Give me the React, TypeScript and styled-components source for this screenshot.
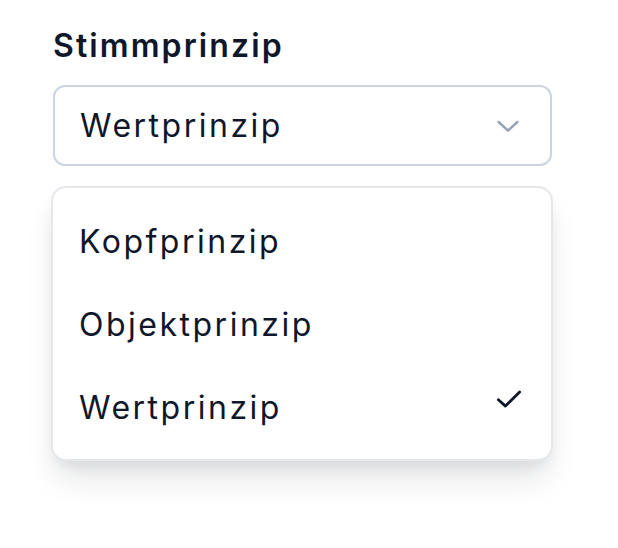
import React from 'react';
import styled, { createGlobalStyle } from 'styled-components';

const options = ['Kopfprinzip', 'Objektprinzip', 'Wertprinzip'];
const selected = 'Wertprinzip';

const App: React.FC = () => {
  return (
    <>
      <GlobalStyle />
      <Page>
        <Field>
          <Label>Stimmprinzip</Label>
          <Trigger type="button">
            <Value>{selected}</Value>
            <Chevron width="32" height="32" viewBox="0 0 24 24">
              <path d="M5 9l7 6.5 7-6.5" />
            </Chevron>
          </Trigger>
          <Panel>
            {options.map((opt) => (
              <Item key={opt}>
                <span>{opt}</span>
                {opt === selected && (
                  <Check width="34" height="34" viewBox="0 0 24 24">
                    <path d="M4.5 12.5l5 4.5 10-10" />
                  </Check>
                )}
              </Item>
            ))}
          </Panel>
        </Field>
      </Page>
    </>
  );
};

export default App;

// Styles
const GlobalStyle = createGlobalStyle`
  body {
    margin: 0;
    background: #ffffff;
    font-family: Inter, 'Noto Sans', sans-serif;
    color: #0f172a;
  }
`;

const Page = styled.div`
  padding: 27px 0 80px 53px;
  width: 499px;
`;

const Field = styled.div`
  display: flex;
  flex-direction: column;
`;

const Label = styled.div`
  font-size: 32px;
  line-height: 38px;
  font-weight: 600;
  letter-spacing: 2.1px;
`;

const Trigger = styled.button`
  margin-top: 20px;
  height: 81px;
  box-sizing: border-box;
  display: flex;
  align-items: center;
  justify-content: space-between;
  padding: 0 26px 0 25px;
  border: 2px solid #cbd5e1;
  border-radius: 12px;
  background: #ffffff;
  font: inherit;
  color: inherit;
`;

const Value = styled.span`
  font-size: 32px;
  line-height: 38px;
  letter-spacing: 2.5px;
`;

const Chevron = styled.svg`
  fill: none;
  stroke: #94a3b8;
  stroke-width: 1.9;
  stroke-linecap: round;
  stroke-linejoin: round;
`;

const Panel = styled.div`
  margin: 20px -1px 0 -2px;
  padding: 12px 0 10px;
  border: 2px solid #e5e7eb;
  border-radius: 15px;
  background: #ffffff;
  box-shadow: 0 22px 32px -6px rgba(15, 23, 42, 0.12),
    0 8px 14px -4px rgba(15, 23, 42, 0.08);
`;

const Item = styled.div`
  height: 83px;
  display: flex;
  align-items: center;
  justify-content: space-between;
  padding: 0 26px 0 26px;
  font-size: 32px;
  line-height: 38px;
  letter-spacing: 2.5px;
  color: #0f172a;
`;

const Check = styled.svg`
  margin-top: -18px;
  margin-right: -1px;
  fill: none;
  stroke: #0f172a;
  stroke-width: 2;
  stroke-linecap: round;
  stroke-linejoin: round;
`;
